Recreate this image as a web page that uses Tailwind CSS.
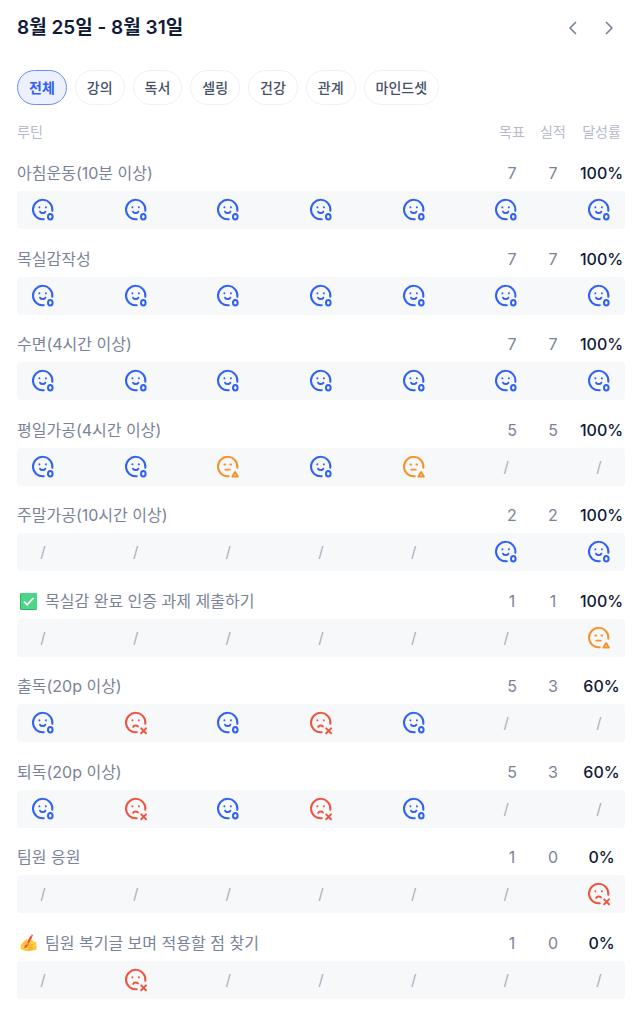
<!DOCTYPE html>
<html lang="ko">
<head>
    <meta charset="UTF-8">
    <meta name="viewport" content="width=device-width, initial-scale=1.0">
    <title>주간 루틴</title>
    <script src="https://cdn.jsdelivr.net/npm/@tailwindcss/browser@4"></script>
</head>
<body class="bg-white font-['Inter','Noto_Sans_CJK_KR',sans-serif] text-[#7b8299]">
    <!-- icons -->
    <svg class="hidden">
        <symbol id="good" viewBox="0 0 24 24">
            <path d="M21.3 12.8A9.7 9.7 0 1 0 12.8 21.2" />
            <path d="M8.4 9.3v.1M14.9 9.3v.1" stroke-width="1.9" />
            <path d="M9.1 13.7c1 1.8 4.2 1.8 5.2 0" />
            <ellipse cx="19.3" cy="18.8" rx="2.3" ry="2.8" />
        </symbol>
        <symbol id="soso" viewBox="0 0 24 24">
            <path d="M21.3 12.8A9.7 9.7 0 1 0 12.8 21.2" />
            <path d="M8.3 9.5h.8M14.4 9.5h.8" stroke-width="1.8" />
            <path d="M9.3 14.7h4.5" stroke-width="1.8" />
            <path d="M19.1 17.1l2.7 4.5h-5.4z" />
        </symbol>
        <symbol id="bad" viewBox="0 0 24 24">
            <path d="M21.3 12.8A9.7 9.7 0 1 0 12.8 21.2" />
            <path d="M8.4 9.3v.1M14.9 9.3v.1" stroke-width="1.9" />
            <path d="M9.2 15.9c.9-1.8 3.7-1.8 4.8-.4" />
            <path d="M17.2 17.4l4.8 4.8M22 17.4l-4.8 4.8" />
        </symbol>
    </svg>

    <div class="pl-4 pr-[15px] pt-3">
        <header class="flex items-center justify-between h-8 pl-px pr-1">
            <h1 class="text-[19px] font-semibold text-[#0f1a38]">8월 25일 - 8월 31일</h1>
            <div class="flex gap-3">
                <button type="button" aria-label="이전 주" class="size-6 cursor-pointer">
                    <svg class="size-6 fill-none stroke-[#7b8299]" viewBox="0 0 24 24" stroke-width="1.7" stroke-linecap="round" stroke-linejoin="round"><path d="M14.5 6.5L9 12l5.5 5.5" /></svg>
                </button>
                <button type="button" aria-label="다음 주" class="size-6 cursor-pointer">
                    <svg class="size-6 fill-none stroke-[#7b8299]" viewBox="0 0 24 24" stroke-width="1.7" stroke-linecap="round" stroke-linejoin="round"><path d="M9.5 6.5L15 12l-5.500 5.500" /></svg>
                </button>
            </div>
        </header>

        <nav class="flex gap-2 mt-[26px] pl-px text-sm font-medium text-[#465069]">
            <button type="button" class="h-[35px] px-[11px] rounded-full border border-[#6a8df5] bg-[#edf1ff] font-semibold text-[#2f62f3]">전체</button>
            <button type="button" class="h-[35px] px-[11px] rounded-full border border-[#f0f1f4]">강의</button>
            <button type="button" class="h-[35px] px-[11px] rounded-full border border-[#f0f1f4]">독서</button>
            <button type="button" class="h-[35px] px-[11px] rounded-full border border-[#f0f1f4]">셀링</button>
            <button type="button" class="h-[35px] px-[11px] rounded-full border border-[#f0f1f4]">건강</button>
            <button type="button" class="h-[35px] px-[11px] rounded-full border border-[#f0f1f4]">관계</button>
            <button type="button" class="h-[35px] px-[11px] rounded-full border border-[#f0f1f4]">마인드셋</button>
        </nav>

        <table id="routines" class="w-full mt-[15px] table-fixed">
            <thead class="text-sm text-[#b7bbc8]">
                <tr class="h-6">
                    <th class="pl-px text-left font-normal">루틴</th>
                    <th class="w-10 font-normal">목표</th>
                    <th class="w-[42px] font-normal">실적</th>
                    <th class="w-[51px] pl-1 font-normal">달성률</th>
                </tr>
            </thead>
        </table>
    </div>

    <script>
        const check = `<svg class="size-[17px] ml-[3px] mr-2" viewBox="0 0 17 17"><rect width="17" height="17" rx="1.5" fill="#2fb36c"/><rect x="1" width="16" height="16" rx="1.5" fill="#4fd588"/><path d="M4 8.6l3.2 3.2L13.4 5" fill="none" stroke="#fff" stroke-width="1.8"/></svg>`;
        const hand = `<svg class="size-[18px] ml-[3px] mr-[7px]" viewBox="0 0 18 18"><path d="M1 10.5L5.5 5.5c1-1 2.3-.5 1.8.9L6.5 8l5-2c1.2-.4 2 .6 1.3 1.5l2.5.3c1.2.2 1.3 1.3.5 1.9 1 .4 1 1.5.2 2 1 .6 1.1 1.6.4 2.2.8.8.4 1.9-.6 2.1L9 17c-3 .3-5.5-.5-8.500-2z" fill="#ffc93c"/><path d="M8 11.500l5-1M8.500 13.500l5-.2M8.500 15.300l4.500.1" stroke="#ee9a28" stroke-width=".8" fill="none"/><path d="M4.6 12.5L10.5 1.8l2 1L7 12.700l-2.800 1.800z" fill="#ea4f3d"/><path d="M10.800 1.600l.8-1.300 1.700.8-.7 1.500z" fill="#f37a66"/><path d="M3.500 9.500c1.500-1.700 3.500-2 5-.8L6.300 11.500z" fill="#ffb52e"/></svg>`;

        // o: done, t: partly done, x: missed, /: not scheduled
        const routines = [
            { name: '아침운동(10분 이상)', goal: 7, done: 7, days: 'ooooooo' },
            { name: '목실감작성', goal: 7, done: 7, days: 'ooooooo' },
            { name: '수면(4시간 이상)', goal: 7, done: 7, days: 'ooooooo' },
            { name: '평일가공(4시간 이상)', goal: 5, done: 5, days: 'ootot//' },
            { name: '주말가공(10시간 이상)', goal: 2, done: 2, days: '/////oo' },
            { name: '목실감 완료 인증 과제 제출하기', icon: check, goal: 1, done: 1, days: '//////t' },
            { name: '출독(20p 이상)', goal: 5, done: 3, days: 'oxoxo//' },
            { name: '퇴독(20p 이상)', goal: 5, done: 3, days: 'oxoxo//' },
            { name: '팀원 응원', goal: 1, done: 0, days: '//////x' },
            { name: '팀원 복기글 보며 적용할 점 찾기', icon: hand, goal: 1, done: 0, days: '/x/////' },
        ];

        const svg = (id, color, label) => `<svg class="size-6 fill-none stroke-2 ${color}" stroke-linecap="round" stroke-linejoin="round" role="img" aria-label="${label}"><use href="#${id}"/></svg>`;
        const marks = {
            o: svg('good', 'stroke-[#2f62f3]', '완료'),
            t: svg('soso', 'stroke-[#f7922a]', '부분 완료'),
            x: svg('bad', 'stroke-[#ee5540]', '미완료'),
            '/': '<span class="w-6 text-center text-[15px] text-[#a9aebb]">/</span>',
        };

        const table = document.getElementById('routines');
        routines.forEach(r => {
            const body = table.createTBody();
            body.className = 'group';
            body.innerHTML = `
                <tr class="h-12 group-even:h-[47px]">
                    <th class="pl-px pb-1 align-bottom text-left font-normal"><span class="flex items-center h-7 text-base">${r.icon || ''}${r.name}</span></th>
                    <td class="pb-1 align-bottom text-center text-base leading-7">${r.goal}</td>
                    <td class="pb-1 align-bottom text-center text-base leading-7">${r.done}</td>
                    <td class="pl-1 pb-1 align-bottom text-center text-base leading-7 font-medium text-[#0f1a38]">${r.done / r.goal * 100}%</td>
                </tr>
                <tr>
                    <td colspan="4" class="pl-px">
                        <div class="flex items-center justify-between h-[38px] px-[14px] rounded bg-[#f7f8fa]">${[...r.days].map(d => marks[d]).join('')}</div>
                    </td>
                </tr>
            `;
        });
    </script>
</body>
</html>
